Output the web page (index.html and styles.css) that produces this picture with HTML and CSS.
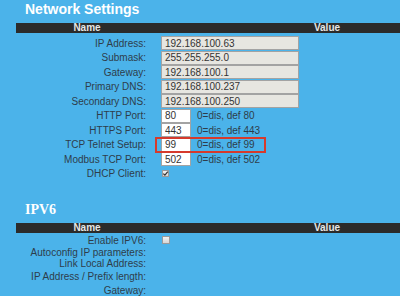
FILE: index.html
```html
<!DOCTYPE html>
<html lang="en">
<head>
    <meta charset="UTF-8">
    <title>Network Settings</title>
    <link rel="stylesheet" href="styles.css">
</head>
<body>
    <div class="page">
        <!-- Network settings -->
        <section class="group">
            <h2 class="title">Network Settings</h2>
            <div class="settings">
                <div class="head"><span>Name</span><span>Value</span></div>
                <div class="rows net">
                    <div class="row"><label>IP Address:</label><div class="val"><input class="long" type="text" value="192.168.100.63" readonly></div></div>
                    <div class="row"><label>Submask:</label><div class="val"><input class="long" type="text" value="255.255.255.0" readonly></div></div>
                    <div class="row"><label>Gateway:</label><div class="val"><input class="long" type="text" value="192.168.100.1" readonly></div></div>
                    <div class="row"><label>Primary DNS:</label><div class="val"><input class="long" type="text" value="192.168.100.237" readonly></div></div>
                    <div class="row"><label>Secondary DNS:</label><div class="val"><input class="long" type="text" value="192.168.100.250" readonly></div></div>
                    <div class="row"><label>HTTP Port:</label><div class="val"><input class="short" type="text" value="80"><span class="hint">0=dis, def 80</span></div></div>
                    <div class="row"><label>HTTPS Port:</label><div class="val"><input class="short" type="text" value="443"><span class="hint">0=dis, def 443</span></div></div>
                    <div class="row"><label>TCP Telnet Setup:</label><div class="val"><span class="marked"><input class="short" type="text" value="99"><span class="hint">0=dis, def 99</span></span></div></div>
                    <div class="row"><label>Modbus TCP Port:</label><div class="val"><input class="short" type="text" value="502"><span class="hint">0=dis, def 502</span></div></div>
                    <div class="row"><label>DHCP Client:</label><div class="val"><span class="check on"><svg viewBox="0 0 7 7" width="7" height="7"><path d="M1.3 3.6 L2.9 5.1 L5.8 1.6" fill="none" stroke="#333" stroke-width="1.2"/></svg></span></div></div>
                </div>
            </div>
        </section>

        <!-- IPV6 -->
        <section class="group">
            <h2 class="title serif">IPV6</h2>
            <div class="settings">
                <div class="head"><span>Name</span><span>Value</span></div>
                <div class="rows v6">
                    <div class="row tall"><label>Enable IPV6:</label><div class="val"><span class="check"></span></div></div>
                    <div class="row slim"><label>Autoconfig IP parameters:</label><div class="val"></div></div>
                    <div class="row slim"><label>Link Local Address:</label><div class="val"></div></div>
                    <div class="row tall"><label>IP Address / Prefix length:</label><div class="val"></div></div>
                    <div class="row tall"><label>Gateway:</label><div class="val"></div></div>
                </div>
            </div>
        </section>
    </div>
</body>
</html>
```

FILE: styles.css
```css
:root { --bg: #4bb3ea; --bar: #2b2b2b; --label: #2e3d4a; --red: #d63a2c; }
html, body { margin: 0; padding: 0; }
body { background: var(--bg); font-family: "Liberation Sans", Arial, sans-serif; font-size: 10px; color: var(--label); overflow: hidden; }
.page { width: 400px; height: 296px; overflow: hidden; }

.title { margin: 0; padding: 1px 0 0 25px; height: 16px; font: bold 14px/16px "Liberation Sans", Arial, sans-serif; color: #fff; }
.title.serif { font-family: "Liberation Serif", "Times New Roman", serif; padding-top: 2px; }
.group + .group { margin-top: 19px; }

.settings { margin: 6px 0 0 16px; width: 480px; }
.group + .group .settings { margin-top: 5px; }
.head { display: grid; grid-template-columns: 142px 338px; height: 10px; background: var(--bar); color: #e6e6e6; font-weight: bold; line-height: 10px; text-align: center; }

.rows.net { padding-top: 3px; }
.row { display: grid; grid-template-columns: 142px 338px; align-items: center; height: 14.5px; }
.row.tall { height: 14px; }
.row.slim { height: 11px; }
.row label { text-align: right; padding-right: 12px; white-space: nowrap; line-height: 11px; }
.val { display: flex; align-items: center; padding-left: 3px; }

input { box-sizing: border-box; height: 14px; margin: 0; padding: 0 3px; border: 1px solid #a3a3a3; font: 10px "Liberation Sans", Arial, sans-serif; color: #333; outline: none; }
input.long { width: 138px; background: #e7e6e1; }
input.short { width: 30px; background: #fff; }
.hint { margin-left: 6px; color: var(--label); white-space: nowrap; }

/* red annotation box */
.marked { position: relative; display: inline-flex; align-items: center; }
.marked::after { content: ""; position: absolute; top: -1px; bottom: -1px; left: -6px; right: -11px; border: 2px solid var(--red); }

.check { display: inline-block; box-sizing: border-box; width: 7px; height: 7px; margin-left: 1px; border: 1px solid #9a9a9a; background: linear-gradient(#f2f2f2, #d6d6d6); }
.check svg { display: block; margin: -1px; }
.v6 .check { width: 8px; height: 8px; }
```
